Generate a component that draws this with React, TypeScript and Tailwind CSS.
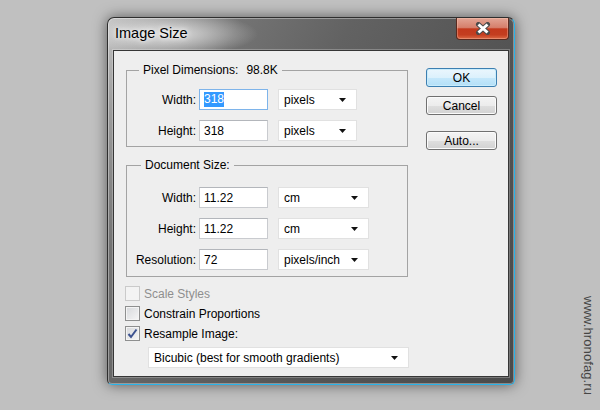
import React from 'react';

const Arrow = () => (
  <svg width="7" height="4" viewBox="0 0 7 4" className="shrink-0">
    <path d="M0 0H7L3.5 4Z" fill="#111" />
  </svg>
);

const Select: React.FC<{ value: string; className: string }> = ({ value, className }) => (
  <div
    className={`${className} h-[21px] flex items-center justify-between pl-[5px] pr-[10px] bg-white border border-[#e1e1e1] text-[12px]`}
  >
    <span>{value}</span>
    <Arrow />
  </div>
);

const Field: React.FC<{ value: string; focused?: boolean }> = ({ value, focused }) => (
  <div
    className={`ml-[3px] w-[69px] h-[21px] flex items-center pl-[4px] bg-white border text-[12px] ${
      focused ? 'border-[#7eb4ea]' : 'border-[#c9cbcf] border-t-[#b3b6bb]'
    }`}
  >
    {focused ? <span className="bg-[#3399ff] text-white leading-[15px]">{value}</span> : <span>{value}</span>}
  </div>
);

const Row: React.FC<{ label: string; value: string; unit: string; unitW: string; focused?: boolean }> = ({
  label,
  value,
  unit,
  unitW,
  focused,
}) => (
  <div className="flex items-center h-[21px]">
    <span className="w-[69px] text-right text-[12px]">{label}</span>
    <Field value={value} focused={focused} />
    <Select value={unit} className={`ml-[10px] ${unitW}`} />
  </div>
);

const Btn: React.FC<{ children: React.ReactNode; primary?: boolean; className?: string }> = ({
  children,
  primary,
  className = '',
}) => (
  <div
    className={`${className} w-[71px] h-[19px] rounded-[3px] border flex items-center justify-center text-[12px] ${
      primary
        ? 'border-[#3c7fb1] bg-[linear-gradient(#eaf6fd,#dcf1fc_50%,#c6e8fb_50%,#b3dff7)] shadow-[inset_0_0_0_1px_#c9ecfc]'
        : 'border-[#707070] bg-[linear-gradient(#f4f4f4,#ececec_50%,#dfdfdf_50%,#d2d2d2)] shadow-[inset_0_0_0_1px_#fbfbfb]'
    }`}
  >
    {children}
  </div>
);

const Check: React.FC<{ label: string; checked?: boolean; disabled?: boolean }> = ({ label, checked, disabled }) => (
  <div className="flex items-center h-[15px]">
    <div
      className={`w-[15px] h-[15px] border flex items-center justify-center ${
        disabled
          ? 'border-[#cacaca] bg-[#f3f3f3]'
          : 'border-[#8e8f8f] bg-[linear-gradient(135deg,#d6d8db,#f6f6f6)] shadow-[inset_0_0_0_1px_#f4f4f4]'
      }`}
    >
      {checked && (
        <svg width="11" height="11" viewBox="0 0 11 11">
          <path d="M1.5 6 L4 9 L9.5 1.5" fill="none" stroke="#3c5290" strokeWidth="2" />
        </svg>
      )}
    </div>
    <span className={`ml-[4px] text-[12px] ${disabled ? 'text-[#8e8e8e]' : 'text-black'}`}>{label}</span>
  </div>
);

export default function App() {
  return (
    <div className="relative w-[600px] h-[410px] overflow-hidden bg-[#c0c0c0] pt-[17px] pl-[107px] [font-family:'Liberation_Sans',Arial,sans-serif] text-black">
      {/* window */}
      <div className="w-[408px] h-[368px] rounded-t-[7px] rounded-b-[5px] border border-[#2e2e2e] border-r-[#27b3ea] border-b-[#27b3ea] bg-[radial-gradient(ellipse_90px_22px_at_60px_16px,rgba(230,230,230,0.9),rgba(230,230,230,0)),linear-gradient(120deg,#c4c4c4_0%,#9c9c9c_9%,#737373_22%,#626262_40%,#555555_65%,#4a4a4a_100%)] shadow-[inset_0_0_0_1px_rgba(255,255,255,0.35),0_0_14px_rgba(0,0,0,0.55)]">
        <div className="flex h-[32px] justify-between items-start">
          <span className="pl-[7px] pt-[5px] text-[14.5px] leading-[20px] [text-shadow:0_0_8px_rgba(255,255,255,0.95),0_0_4px_rgba(255,255,255,0.9)]">
            Image Size
          </span>
          <div className="mr-[5px] w-[53px] h-[22px] rounded-b-[4px] border border-t-0 border-[#5a2a1f] bg-[linear-gradient(#e2a595,#d6806c_45%,#c3391d_52%,#c43e20_80%,#dc6a45)] shadow-[inset_0_0_0_1px_rgba(255,210,190,0.35)] flex items-center justify-center">
            <svg width="16" height="13" viewBox="0 0 16 13">
              <path d="M3.5 2.5 L12.5 10.5 M12.5 2.5 L3.5 10.5" stroke="#4a4a4a" strokeWidth="5" strokeLinecap="round" />
              <path d="M3.5 2.5 L12.5 10.5 M12.5 2.5 L3.5 10.5" stroke="#ffffff" strokeWidth="3" />
            </svg>
          </div>
        </div>

        {/* client area */}
        <div className="mx-[5px] h-[327px] border border-[#363636] bg-[#eeeeee] flex shadow-[0_0_0_1px_rgba(255,255,255,0.25)]">
          <div className="w-[295px] flex flex-col">
            <fieldset className="mt-[11px] ml-[12px] w-[282px] border border-[#a3a3a3] pt-[11px] pb-[5px]">
              <legend className="ml-[12px] px-[4px] leading-[16px] text-[12px]">
                Pixel Dimensions:<span className="ml-[8px]">98.8K</span>
              </legend>
              <div className="flex flex-col gap-[10px]">
                <Row label="Width:" value="318" unit="pixels" unitW="w-[79px]" focused />
                <Row label="Height:" value="318" unit="pixels" unitW="w-[79px]" />
              </div>
            </fieldset>

            <fieldset className="mt-[10px] ml-[12px] w-[282px] border border-[#a3a3a3] pt-[14px] pb-[6px]">
              <legend className="ml-[14px] px-[4px] leading-[16px] text-[12px]">Document Size:</legend>
              <div className="flex flex-col gap-[10px]">
                <Row label="Width:" value="11.22" unit="cm" unitW="w-[91px]" />
                <Row label="Height:" value="11.22" unit="cm" unitW="w-[91px]" />
                <Row label="Resolution:" value="72" unit="pixels/inch" unitW="w-[91px]" />
              </div>
            </fieldset>

            <div className="mt-[9px] ml-[11px] flex flex-col gap-[5px]">
              <Check label="Scale Styles" disabled />
              <Check label="Constrain Proportions" />
              <Check label="Resample Image:" checked />
            </div>

            <Select value="Bicubic (best for smooth gradients)" className="mt-[6px] ml-[34px] w-[261px]" />
          </div>

          <div className="ml-[17px] pt-[17px] flex flex-col">
            <Btn primary>OK</Btn>
            <Btn className="mt-[9px]">Cancel</Btn>
            <Btn className="mt-[16px]">Auto...</Btn>
          </div>
        </div>
      </div>

      <span className="absolute left-[578px] top-[296px] [writing-mode:vertical-rl] text-[13px] text-[#454545] tracking-[0.1px]">
        www.hronofag.ru
      </span>
    </div>
  );
}
